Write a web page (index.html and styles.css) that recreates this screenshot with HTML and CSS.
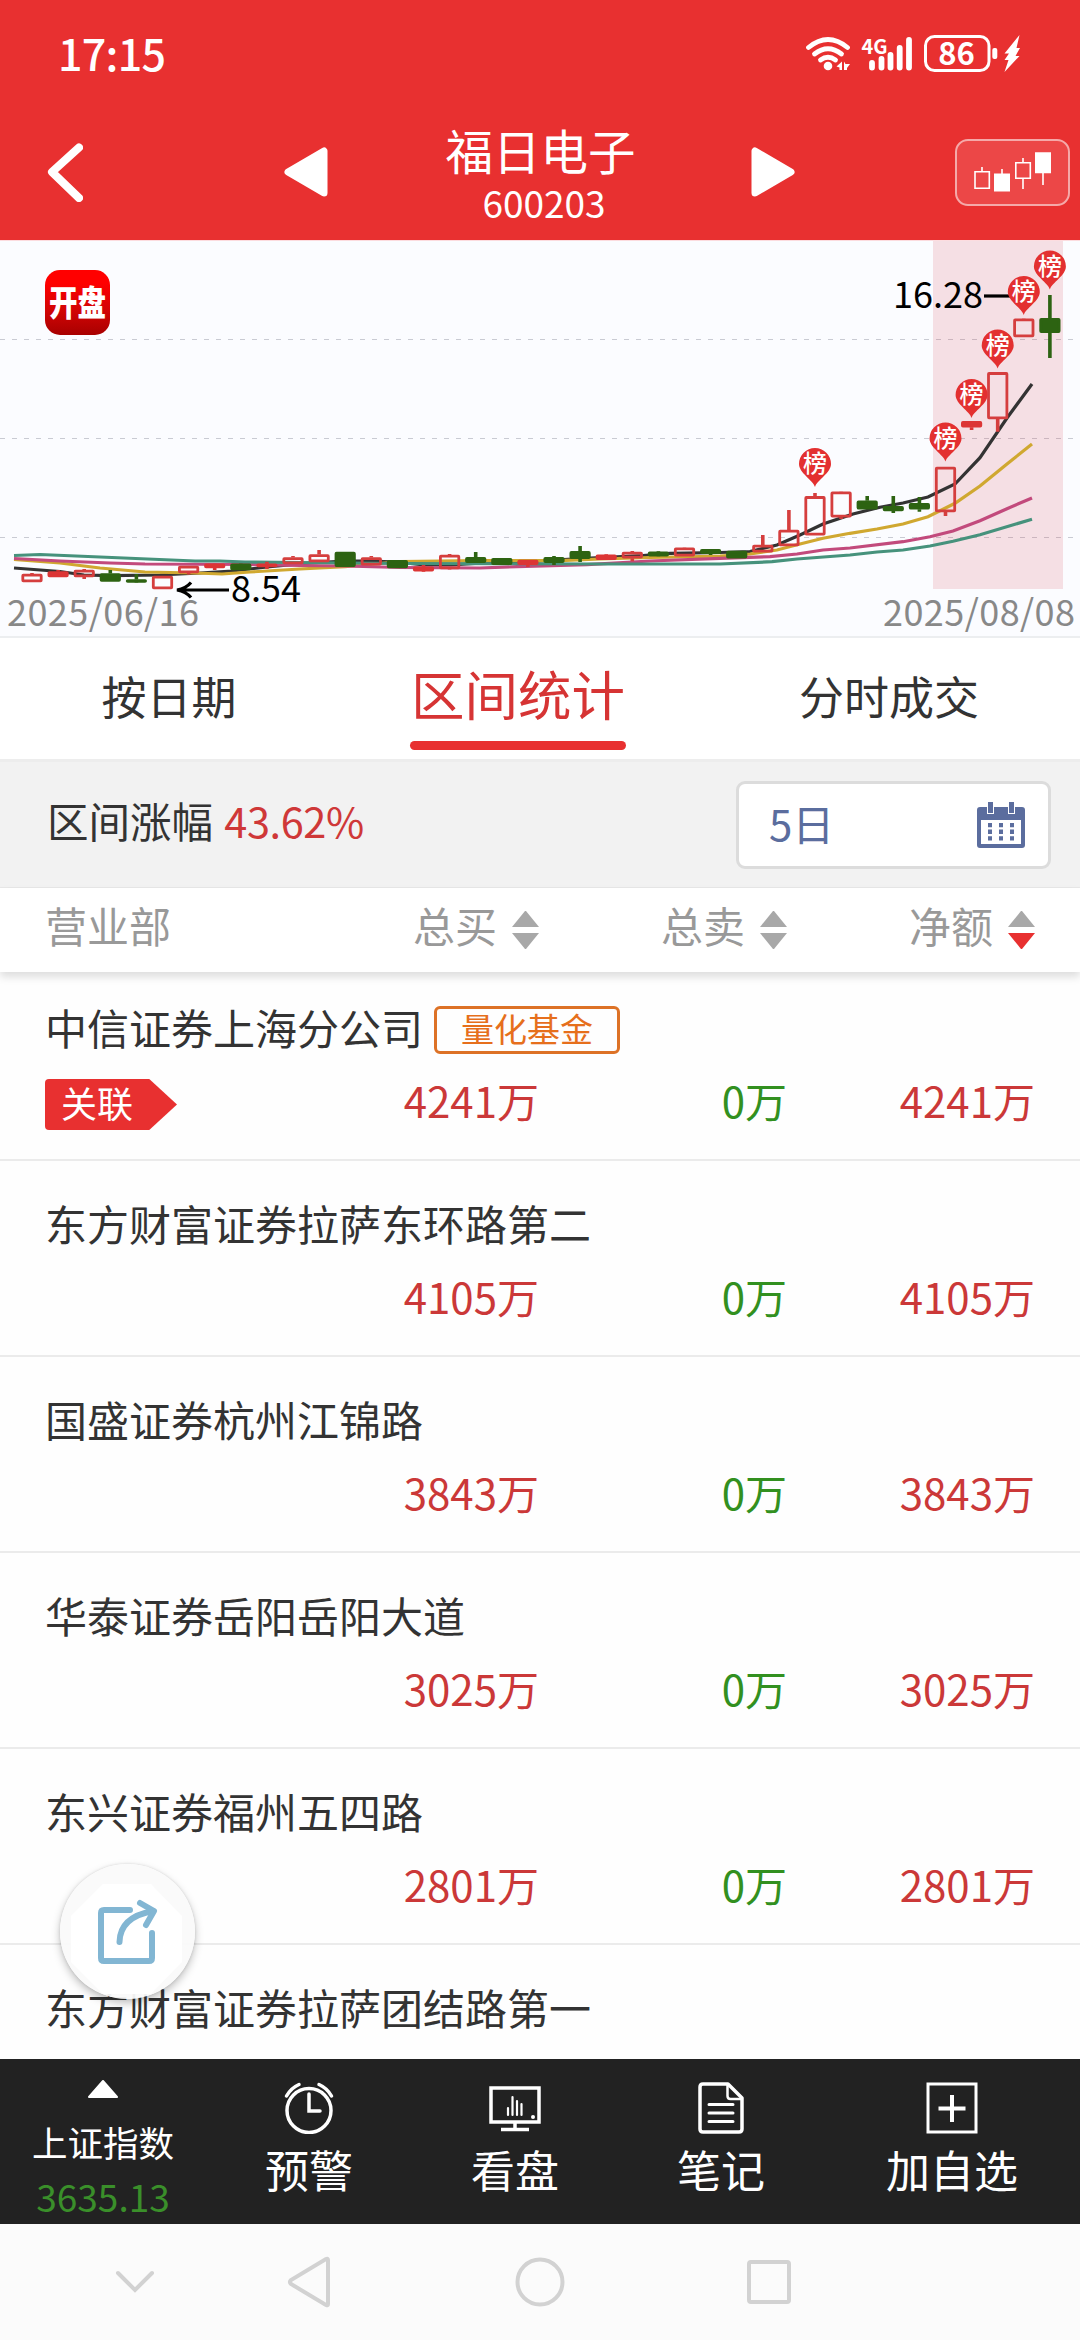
FILE: index.html
```html
<!DOCTYPE html>
<html lang="zh-CN">

	<head>
		<meta charset="UTF-8">
		<meta name="viewport" content="width=device-width, initial-scale=1.0, user-scalable=no">
		<title>福日电子</title>
		<link rel="stylesheet" href="styles.css">
	</head>

	<body>
		<div class="status">
			<span class="time">17:15</span>
			<svg class="status_icons" width="220" height="50" viewBox="804 30 220 50">
				<g fill="none" stroke="#fff" stroke-width="4.8" stroke-linecap="round">
					<path d="M808.500 47.500Q828 31.500 847.500 47.500" />
					<path d="M814.500 54Q828 43.500 841.500 54" />
					<path d="M820.500 60Q828 54.500 835.500 60" />
				</g>
				<circle cx="828" cy="66" r="4.300" fill="#fff" />
				<path d="M842 61.500V70H839.500V67.500L836.500 66.500ZM844 61.500L845.500 64H850L847 68V70H844Z" fill="#fff" />
				<text class="net" x="861.500" y="53.500">4G</text>
				<g stroke="#fff" stroke-width="5.800" stroke-linecap="round">
					<path d="M872 63V67.500M881.500 59V67.500M890.500 55V67.500M899.700 48V67.500M909 40V67.500" />
				</g>
				<rect x="925.500" y="36.500" width="63.500" height="34" rx="9" fill="none" stroke="#fff" stroke-width="3" />
				<text class="battery" x="956.500" y="65" text-anchor="middle">86</text>
				<rect x="992.300" y="48" width="5" height="11" rx="2" fill="#fff" />
				<path d="M1019.500 35L1004.500 53.500H1009L1004.500 60H1008.500L1004.500 72L1019.500 56H1015.500L1020 48H1016.500Z" fill="#fff" />
			</svg>
		</div>
		<div class="header">
			<svg class="back" width="40" height="60" viewBox="0 0 40 60">
				<path d="M36 5.500L9 30L36 56" />
			</svg>
			<svg class="prev" width="44" height="50" viewBox="0 0 44 50">
				<path d="M40 4V46L4 25Z" />
			</svg>
			<div class="title">
				<p class="name">福日电子</p>
				<p class="code">600203</p>
			</div>
			<svg class="next" width="44" height="50" viewBox="0 0 44 50">
				<path d="M4 4V46L40 25Z" />
			</svg>
			<div class="kbtn">
				<svg width="80" height="42" viewBox="973 150 80 42">
					<g fill="none" stroke="#fff" stroke-width="1.600">
						<path d="M975 171.800H989.300V188.200H975ZM982 171V167M1002 174V169M1015.800 162.800H1030.300V178.200H1015.800ZM1023 162V158M1023 179V189M1043 172V185" />
					</g>
					<path d="M994 173.500H1010V191.500H994ZM1035 152.300H1051V173.300H1035Z" fill="#fff" />
				</svg>
			</div>
		</div>

		<div class="chart">
			<svg id="kline" width="1080" height="398" viewBox="0 0 1080 398">
				<path class="grid" d="M0 99.500H1080M0 198.500H1080M0 297.500H1080" />
				<rect class="range" x="933" y="1" width="130" height="348" />
				<g class="ma">
					<polyline stroke="#333" points="14,328 60,331.500 84,335 110,335.700 160,335 200,333 232,331 267,327 310,323 345,321 371,321 397,322 424,325 450,325 500,322 540,321 580,318.700 643,315.700 670,313.300 720,312.500 750,311.500 777,305 800,295 823,284 853,274 880,267.300 903,263 928,257 955,244 980,217.700 1007,178 1032,144" />
					<polyline stroke="#d0a830" points="14,319.500 60,323 100,328 145,332 195,333 222,334 250,332 300,329 345,326.700 375,324 400,321.700 480,320.700 560,320.700 600,319 650,317.500 700,316.500 720,316 750,314 777,310 800,304 823,298.300 850,293.300 877,289 903,284 928,276.700 955,263.300 980,246 1007,224 1032,204" />
					<polyline stroke="#c24a7c" points="14,318.500 60,321 110,323 145,324 250,324.500 300,325.500 345,326 400,327.500 480,328 517,326.700 587,324.700 650,321 720,318.300 770,316.700 797,314 823,310 850,308 903,301.700 930,296.700 953,291 980,280.700 1007,268.700 1032,258" />
					<polyline stroke="#46927c" points="14,315.500 40,314.500 100,317 195,321 220,321 245,322 300,322.500 400,323.500 600,324 720,324 772,321.700 797,319 850,315 877,312 903,310 930,306 953,301.300 980,294.700 1032,279.300" />
				</g>
				<g id="candles"></g>
				<g class="mark">
					<path d="M177 350H229M191 342.500Q186 348.500 177 350Q186 351.500 191 357.500" />
					<path d="M984 56H1012" />
					<text x="231" y="362">8.54</text>
					<text x="893" y="68">16.28</text>
				</g>
				<g id="pins"></g>
				<text class="date" x="7" y="386" textLength="192">2025/06/16</text>
				<text class="date" x="883" y="386" textLength="192">2025/08/08</text>
			</svg>
			<div class="logo"><span>开盘</span></div>
		</div>

		<div class="tabs">
			<div class="tab">按日期</div>
			<div class="tab active">区间统计<i></i></div>
			<div class="tab last">分时成交</div>
		</div>

		<div class="filter">
			<p>区间涨幅 <span class="red">43.62%</span></p>
			<div class="select">
				<span>5日</span>
				<svg width="48" height="46" viewBox="0 0 48 46">
					<path d="M3 5H45Q48 5 48 8V43Q48 46 45 46H3Q0 46 0 43V8Q0 5 3 5ZM4 18V42H44V18Z" fill="#5b6d9e" fill-rule="evenodd" />
					<path d="M10 0H17V12H10ZM31 0H38V12H31Z" fill="#fff" />
					<path d="M11 0H16V11H11ZM32 0H37V11H32Z" fill="#5b6d9e" />
					<path d="M13 21V39M24 21V39M35 21V39" stroke="#5b6d9e" stroke-width="4" stroke-dasharray="4.300 2.300" />
				</svg>
			</div>
		</div>

		<div class="thead">
			<span class="col_name">营业部</span>
			<span class="col c1">总买<i class="sort"></i></span>
			<span class="col c2">总卖<i class="sort"></i></span>
			<span class="col c3">净额<i class="sort down"></i></span>
		</div>

		<div class="list">
			<div class="row">
				<p class="dept">中信证券上海分公司<span class="tag">量化基金</span></p>
				<div class="nums"><span class="link"><b>关联</b></span><span class="num c1">4241万</span><span class="num c2">0万</span><span class="num c3">4241万</span></div>
			</div>
			<div class="row">
				<p class="dept">东方财富证券拉萨东环路第二</p>
				<div class="nums"><span class="num c1">4105万</span><span class="num c2">0万</span><span class="num c3">4105万</span></div>
			</div>
			<div class="row">
				<p class="dept">国盛证券杭州江锦路</p>
				<div class="nums"><span class="num c1">3843万</span><span class="num c2">0万</span><span class="num c3">3843万</span></div>
			</div>
			<div class="row">
				<p class="dept">华泰证券岳阳岳阳大道</p>
				<div class="nums"><span class="num c1">3025万</span><span class="num c2">0万</span><span class="num c3">3025万</span></div>
			</div>
			<div class="row">
				<p class="dept">东兴证券福州五四路</p>
				<div class="nums"><span class="num c1">2801万</span><span class="num c2">0万</span><span class="num c3">2801万</span></div>
			</div>
			<div class="row">
				<p class="dept">东方财富证券拉萨团结路第一</p>
			</div>
		</div>

		<div class="share">
			<svg width="136" height="136" viewBox="0 0 136 136">
				<path d="M43 20H91L122 52V98L91 130H43L11 98V52Z" fill="#fff" />
				<g fill="none" stroke="#82b6d3" stroke-width="6" stroke-linecap="round" stroke-linejoin="round">
					<path d="M70 46H44Q41 46 41 49V94Q41 97 44 97H89Q92 97 92 94V69" />
					<path d="M59.500 78Q60 53 93 47" />
					<path d="M80 39L94 47L86 61" />
				</g>
			</svg>
		</div>

		<div class="toolbar">
			<div class="index">
				<svg width="30" height="18" viewBox="0 0 30 18">
					<path d="M15 1L29 17H1Z" fill="#fff" stroke="#fff" stroke-width="2" stroke-linejoin="round" />
				</svg>
				<p>上证指数</p>
				<p class="green">3635.13</p>
			</div>
			<div class="tool">
				<svg width="52" height="52" viewBox="0 0 52 52">
					<circle cx="26" cy="28.500" r="22" />
					<path d="M26 12V29H37" stroke-linecap="round" />
					<path d="M3.500 14Q8 6 16 2.500M48.500 14Q44 6 36 2.500" stroke-linecap="round" />
				</svg>
				<p>预警</p>
			</div>
			<div class="tool">
				<svg width="52" height="52" viewBox="0 0 52 52">
					<path d="M2 6H50V40H2Z" />
					<path d="M26 40V46M12 47.500H40" />
					<path d="M19 26V33M23.500 15V33M28 19V33M32.500 22V33" stroke-width="2.200" stroke-linecap="round" />
					<circle cx="44" cy="35" r="2" fill="#fff" stroke="none" />
				</svg>
				<p>看盘</p>
			</div>
			<div class="tool">
				<svg width="52" height="52" viewBox="0 0 52 52">
					<path d="M8 2H33L47 16V47Q47 50 44 50H8Q5 50 5 47V5Q5 2 8 2" stroke-linejoin="round" />
					<path d="M32.500 3V14Q32.500 17 35.500 17H46" stroke-width="2.500" />
					<path d="M14 22.500H38M14 31H38M14 39.500H38" stroke-width="3" stroke-linecap="round" />
				</svg>
				<p>笔记</p>
			</div>
			<div class="tool wide">
				<svg width="52" height="52" viewBox="0 0 52 52">
					<path d="M2 2H50V50H2Z" stroke-width="3" />
					<path d="M26 13V40M12.500 26.500H39.500" stroke-width="4" />
				</svg>
				<p>加自选</p>
			</div>
		</div>

		<div class="nav">
			<svg width="1080" height="116" viewBox="0 0 1080 116">
				<path d="M118 49L135 66L152 49" />
				<path d="M328 36V80Q328 82 326 81L291 60Q289 58 291 56L326 35Q328 34 328 36Z" />
				<circle cx="540" cy="58" r="22.500" />
				<rect x="749" y="38" width="40" height="40" rx="2" />
			</svg>
		</div>

		<script type="text/javascript">
			var RED = "#d53e3e";
			var GREEN = "#2d6312";
			// [类型, 最高, 实体上, 实体下, 最低]  r: 空心红  f: 实心红  g: 绿
			var data = [
				["r", 333, 334, 342, 342], ["f", 330, 331.5, 337, 337], ["r", 329, 330, 337, 339], ["g", 330, 333.5, 341.5, 341.5],
				["g", 334, 339.5, 342.5, 343], ["r", 336, 336, 349, 349], ["r", 326, 326, 333, 334.5], ["f", 324, 323.7, 328, 330],
				["g", 324, 323.7, 330, 330], ["f", 321.7, 323.7, 327, 329], ["r", 316, 317.5, 324, 324], ["r", 310, 314.5, 322, 322],
				["g", 312, 312, 326.7, 326.7], ["r", 316, 317.5, 325.3, 325.3], ["g", 320, 320.3, 328, 328], ["f", 325, 326.7, 331.3, 332],
				["r", 314, 315, 329, 329.5], ["g", 312, 317.3, 322.7, 322.7], ["g", 318, 318.3, 324.7, 324.7], ["f", 320, 320, 324.7, 327],
				["g", 316, 317.3, 322.7, 325], ["g", 306, 311.3, 318.7, 322], ["f", 314, 314.7, 319.7, 320], ["r", 311, 312, 318.3, 321.3],
				["g", 311, 311.7, 316.3, 316.5], ["r", 308, 307.7, 316.3, 316.3], ["g", 309, 309.3, 313.7, 315], ["g", 311, 311, 318.3, 318.3],
				["r", 295, 305, 312.3, 312.3], ["r", 270, 290, 306, 306], ["r", 253, 256.3, 295.3, 295.3], ["r", 252, 251.7, 277.3, 279],
				["g", 256, 260.7, 269.3, 269.3], ["g", 256, 266.3, 271, 273], ["g", 257, 263.3, 269.3, 271.7], ["r", 227, 227, 272, 276],
				["f", 182, 181.3, 187.3, 190], ["r", 132.5, 132.3, 179, 191.7], ["r", 79, 78.7, 97, 97], ["g", 55, 78.3, 92.7, 118]
			];
			// [K线序号, 尖端位置]
			var pins = [[30, 247], [35, 221.5], [36, 178], [37, 128.5], [38, 75], [39, 49.5]];

			function cx(i) {
				return 32 + 26.1 * i;
			}

			var html = "";
			for (var i = 0; i < data.length; i++) {
				var d = data[i];
				var x = cx(i);
				var color = d[0] == "g" ? GREEN : d[0] == "f" ? "#dc3535" : RED;
				html += '<path d="M' + x + ' ' + d[1] + 'V' + d[2] + 'M' + x + ' ' + d[3] + 'V' + d[4] + '" stroke="' + color + '" stroke-width="3.6"/>';
				html += '<rect x="' + (x - 9.2) + '" y="' + (d[2] + 1.2) + '" width="18.4" height="' + Math.max(d[3] - d[2] - 2.4, 0.5) + '" rx="0.5" stroke-width="2.8" stroke="' + color + '" fill="' + (d[0] == "r" ? "none" : color) + '"/>';
			}
			document.querySelector("#candles").innerHTML = html;

			html = "";
			for (var j = 0; j < pins.length; j++) {
				html += '<g transform="translate(' + cx(pins[j][0]) + ' ' + pins[j][1] + ')">';
				html += '<path d="M0 0C-2 -7 -16 -14 -16 -23A16 16 0 0 1 16 -23C16 -14 2 -7 0 0Z" fill="#e33030"/>';
				html += '<text class="pin" y="-15" text-anchor="middle">榜</text></g>';
			}
			document.querySelector("#pins").innerHTML = html;
		</script>
	</body>

</html>
```
FILE: styles.css
```css
body {
	width: 1080px;
	height: 2340px;
	margin: 0;
	overflow: hidden;
	position: relative;
	display: flex;
	flex-direction: column;
	background: #fefefe;
	color: #333;
	font-family: "Noto Sans CJK SC", sans-serif;
	font-size: 42px;
	line-height: 60px;
}

p {
	margin: 0;
}

svg {
	display: block;
	flex-shrink: 0;
}

.status,
.header {
	background: #e83030;
	color: #fff;
	display: flex;
	box-sizing: border-box;
}

.status {
	height: 108px;
	padding: 0 56px 0 58px;
	justify-content: space-between;
}

.time {
	font-size: 43px;
	font-weight: 500;
	line-height: 60px;
	letter-spacing: -.7px;
	padding-top: 22px;
}

.status_icons {
	margin-top: 30px;
}

.net {
	font-size: 20px;
	font-weight: 700;
	fill: #fff;
}

.battery {
	font-size: 31px;
	font-weight: 700;
	fill: #fff;
}

.header {
	height: 132px;
	padding: 0 10px 0 43px;
	align-items: flex-start;
}

.back {
	margin-top: 34px;
	fill: none;
	stroke: #fff;
	stroke-width: 8;
	stroke-linecap: round;
	stroke-linejoin: round;
}

.prev,
.next {
	margin-top: 39px;
	fill: #fff;
	stroke: #fff;
	stroke-width: 7;
	stroke-linejoin: round;
}

.prev {
	margin-left: 201px;
}

.title {
	width: 423px;
	text-align: center;
}

.name {
	font-size: 47.5px;
	line-height: 56px;
	margin-top: 14px;
	margin-right: -2px;
}

.code {
	font-size: 37px;
	line-height: 40px;
	margin-top: 4px;
	margin-right: -9px;
}

.kbtn {
	width: 115px;
	height: 67px;
	margin: 31px 0 0 auto;
	box-sizing: border-box;
	border: 2px solid #f5a9a9;
	border-radius: 13px;
	background: #ec4747;
	padding: 9px 0 0 16px;
}

.chart {
	height: 398px;
	position: relative;
	background: #fbfcff;
	box-shadow: inset 0 1px #fcdcdf, inset 0 -2px #eceef0;
}

.grid {
	stroke: #c9cbd3;
	stroke-width: 1;
	stroke-dasharray: 5 7;
}

.ma {
	fill: none;
	stroke-width: 3.2;
}

.range {
	fill: #d93b4b;
	opacity: .15;
}

.mark path {
	fill: none;
	stroke: #000;
	stroke-width: 3.2;
}

.mark text {
	font-size: 36px;
	fill: #000;
}

.date {
	font-size: 36px;
	fill: #888;
}

.pin {
	font-size: 24px;
	font-weight: 500;
	fill: #fff;
}

.logo {
	position: absolute;
	left: 45px;
	top: 30px;
	width: 65px;
	height: 65px;
	border-radius: 15px;
	background: linear-gradient(#f00 20%, #d40505 60%, #a80000);
	color: #fff;
	font-size: 28.5px;
	font-weight: 900;
	line-height: 62px;
	text-align: center;
}

.logo span {
	display: block;
	transform: scaleY(1.25);
}

.tabs {
	height: 121px;
	display: flex;
	background: #fff;
	text-align: center;
	font-size: 45px;
	line-height: 115px;
}

.tab {
	width: 338px;
}

.active {
	width: 360px;
	font-size: 53.5px;
	line-height: 110px;
	color: #d63434;
}

.active i {
	display: block;
	width: 216px;
	height: 9px;
	margin: -7px auto 0;
	border-radius: 5px;
	background: #e83030;
}

.last {
	width: 382px;
}

.filter {
	height: 129px;
	padding: 0 29px 0 47px;
	box-sizing: border-box;
	border-top: 3px solid #ededed;
	border-bottom: 1px solid #e8e8e8;
	background: #f2f2f2;
	display: flex;
	justify-content: space-between;
	align-items: center;
}

.filter p {
	font-size: 41.5px;
	margin-top: -9px;
}

.red {
	color: #cf3838;
	margin-left: 2px;
	letter-spacing: -.4px;
}

.select {
	width: 315px;
	height: 88px;
	box-sizing: border-box;
	border: 3px solid #dcdcdc;
	border-radius: 9px;
	background: #fff;
	color: #5b6d9e;
	display: flex;
	justify-content: space-between;
	align-items: center;
	padding: 0 23px 0 30px;
}

.select span {
	margin-top: -3px;
}

.thead {
	height: 84px;
	line-height: 73px;
	flex-shrink: 0;
	position: relative;
	background: #fff;
	box-shadow: 0 5px 8px rgba(0, 0, 0, .13);
	color: #999;
	display: flex;
	padding-left: 45px;
}

.col_name {
	width: 197px;
}

.col {
	display: flex;
	justify-content: flex-end;
}

.c1 {
	width: 297px;
}

.c2 {
	width: 248px;
}

.c3 {
	width: 248px;
}

.sort {
	width: 27px;
	margin: 23px 0 0 15px;
}

.sort::before,
.sort::after {
	content: "";
	display: block;
	border: 13.5px solid transparent;
	border-top: none;
	border-bottom: 16px solid #a8a8a8;
}

.sort::after {
	margin-top: 6px;
	border-bottom: none;
	border-top: 16px solid #a8a8a8;
}

.down::after {
	border-top-color: #e83030;
}

.list {
	height: 1087px;
	flex-shrink: 0;
	overflow: hidden;
}

.row {
	height: 196px;
	box-sizing: border-box;
	border-bottom: 2px solid #ebebeb;
	padding: 32px 0 0 45px;
}

.row:first-child {
	height: 189px;
	padding-top: 25px;
}

.dept {
	height: 73px;
	display: flex;
	align-items: flex-start;
}

.tag {
	height: 42px;
	margin: 9px 0 0 11px;
	border: 3px solid #dd7226;
	border-radius: 6px;
	padding: 0 24px;
	color: #e66f1c;
	font-size: 33px;
	line-height: 38px;
}

.nums {
	display: flex;
	height: 60px;
}

.num {
	text-align: right;
	color: #cb3838;
}

.nums .c1 {
	margin-left: 197px;
}

.nums .c2 {
	color: #32901f;
}

.link {
	width: 132px;
	height: 51px;
	margin-top: 9px;
	background: #e83030;
	clip-path: polygon(0 0, 79% 0, 100% 50%, 79% 100%, 0 100%);
	border-radius: 4px;
}

.link b {
	display: block;
	font-weight: 400;
	font-size: 36px;
	line-height: 46px;
	color: #fff;
	padding-left: 16px;
}

.nums .link + .c1 {
	margin-left: 65px;
}

.share {
	position: absolute;
	left: 60px;
	top: 1864px;
	width: 135px;
	height: 135px;
	border-radius: 50%;
	background: rgba(250, 250, 250, .95);
	box-shadow: 0 4px 8px rgba(0, 0, 0, .25), 0 0 3px rgba(0, 0, 0, .12);
}

.toolbar {
	height: 165px;
	flex-shrink: 0;
	display: flex;
	background: #222;
	color: #fff;
	text-align: center;
}

.index {
	width: 206px;
	font-size: 35.5px;
}

.index svg {
	margin: 21px auto 0;
}

.index p {
	line-height: 50px;
	margin-top: 19px;
}

.index .green {
	font-size: 37px;
	margin-top: 4px;
	color: #3a8f2a;
}

.tool {
	width: 206px;
	font-size: 44px;
}

.tool svg {
	margin: 23px auto 0;
	fill: none;
	stroke: #fff;
	stroke-width: 3.5;
}

.tool p {
	line-height: 60px;
	margin-top: 5px;
}

.wide {
	width: 256px;
}

.nav {
	height: 116px;
	background: #fbfbfb;
}

.nav svg {
	fill: none;
	stroke: #d2d2d2;
	stroke-width: 4;
	stroke-linecap: round;
}
```
